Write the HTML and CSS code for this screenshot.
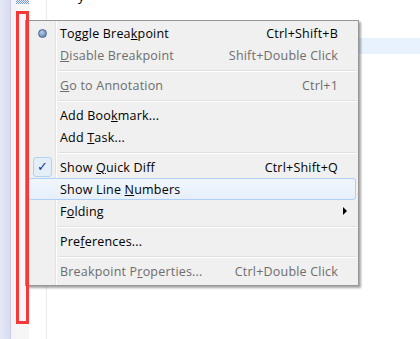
FILE: index.html
```html
<!DOCTYPE html>
<html lang="en">
<head>
    <meta charset="UTF-8">
    <title>Editor context menu</title>
    <link rel="stylesheet" href="styles.css">
</head>
<body>
    <div class="screen">
        <!-- editor backdrop -->
        <div class="side"></div>
        <div class="side-edge"></div>
        <div class="ruler"><div class="marker"></div></div>
        <div class="editor">
            <div class="code-line"><span class="glyph">y</span></div>
            <div class="current-line"></div>
        </div>

        <!-- context menu -->
        <div class="menu">
            <div class="item">
                <span class="icon"><span class="bp-dot"></span></span>
                <span class="label">Toggle Brea<u>k</u>point</span>
                <span class="key">Ctrl+Shift+B</span>
            </div>
            <div class="item disabled">
                <span class="icon"></span>
                <span class="label"><u>D</u>isable Breakpoint</span>
                <span class="key">Shift+Double Click</span>
            </div>
            <div class="sep"></div>
            <div class="item disabled">
                <span class="icon"></span>
                <span class="label"><u>G</u>o to Annotation</span>
                <span class="key">Ctrl+1</span>
            </div>
            <div class="sep"></div>
            <div class="item">
                <span class="icon"></span>
                <span class="label">Add Boo<u>k</u>mark...</span>
            </div>
            <div class="item">
                <span class="icon"></span>
                <span class="label">Add <u>T</u>ask...</span>
            </div>
            <div class="sep"></div>
            <div class="item">
                <span class="icon"><span class="check-box">&#10003;</span></span>
                <span class="label">Show <u>Q</u>uick Diff</span>
                <span class="key">Ctrl+Shift+Q</span>
            </div>
            <div class="item hover">
                <span class="icon"></span>
                <span class="label">Show Line <u>N</u>umbers</span>
            </div>
            <div class="item">
                <span class="icon"></span>
                <span class="label">F<u>o</u>lding</span>
                <span class="sub"></span>
            </div>
            <div class="sep"></div>
            <div class="item">
                <span class="icon"></span>
                <span class="label">Pre<u>f</u>erences...</span>
            </div>
            <div class="sep"></div>
            <div class="item disabled">
                <span class="icon"></span>
                <span class="label">Breakpoint P<u>r</u>operties...</span>
                <span class="key">Ctrl+Double Click</span>
            </div>
        </div>

        <!-- red callout drawn over the ruler -->
        <div class="callout"></div>
    </div>
</body>
</html>
```

FILE: styles.css
```css
body {
    margin: 0;
    background: #fff;
    font-family: "Open Sans", "Noto Sans CJK SC", sans-serif;
    font-size: 12.5px;
    letter-spacing: 0.2px;
    color: #000;
}
.screen {
    position: relative;
    width: 420px;
    height: 339px;
    overflow: hidden;
    display: flex;
}
.side {
    width: 10px;
    background: linear-gradient(to right, #e6e8f6, #d9dcf0);
}
.side-edge {
    width: 5px;
    border-left: 1px solid #c9cce2;
    background: #f3f3f8;
}
.ruler {
    width: 13px;
    background: #f6f6f6;
}
.marker {
    height: 4px;
    background: repeating-conic-gradient(#7d9be0 0 25%, #e8eefc 0 50%) 0 0 / 2px 2px;
}
.editor {
    flex: 1;
    position: relative;
    background: linear-gradient(to right, #fff 17px, #ececec 17px, #ececec 18px, #fff 18px);
}
.code-line {
    height: 4px;
    overflow: hidden;
    position: relative;
}
.glyph {
    position: absolute;
    left: 49px;
    top: -12px;
    font-size: 13px;
    line-height: 16px;
}
.current-line {
    margin-top: 34px;
    margin-left: 18px;
    height: 16px;
    background: #e8f2fe;
}

/* menu */
.menu {
    position: absolute;
    left: 25px;
    top: 20px;
    width: 334px;
    box-sizing: border-box;
    padding: 1px 2px 3px 2px;
    border: 1px solid #979797;
    background: linear-gradient(to right, transparent 29px, #e2e3e3 29px, #e2e3e3 30px, #fff 30px, #fff 31px, transparent 31px), #f0f0f0;
    box-shadow: 2px 2px 2px rgba(0, 0, 0, 0.35);
}
.item {
    height: 22px;
    display: flex;
    align-items: center;
    box-sizing: border-box;
    border: 1px solid transparent;
    border-radius: 3px;
}
.item.hover {
    border-color: #aecff7;
    background: linear-gradient(#f1f6fd, #e7effa);
}
.item.disabled {
    color: #6d6d6d;
}
.icon {
    width: 26px;
    height: 20px;
    display: flex;
    align-items: center;
    justify-content: center;
}
.label {
    flex: 1;
    padding-left: 5px;
    white-space: nowrap;
}
.key {
    padding-right: 17px;
    white-space: nowrap;
}
.sub {
    width: 0;
    height: 0;
    margin-right: 8px;
    border-top: 4px solid transparent;
    border-bottom: 4px solid transparent;
    border-left: 4px solid #000;
}
.sep {
    height: 8px;
    margin-left: 30px;
    margin-right: 0;
    background: linear-gradient(transparent 4px, #e0e0e0 4px, #e0e0e0 5px, #fff 5px, #fff 6px, transparent 6px);
}
.bp-dot {
    width: 7px;
    height: 7px;
    border-radius: 50%;
    border: 1px solid #46648f;
    background: radial-gradient(circle at 40% 35%, #b8cde6, #6f91bd 70%);
}
.check-box {
    width: 19px;
    height: 20px;
    box-sizing: border-box;
    margin-left: 1px;
    border: 1px solid #b3d2f2;
    border-radius: 3px;
    background: #e4eef9;
    color: #1a3a9e;
    font-family: "DejaVu Sans", sans-serif;
    font-size: 13px;
    line-height: 18px;
    text-align: center;
}

/* red highlight frame */
.callout {
    position: absolute;
    left: 16px;
    top: 11px;
    width: 13px;
    height: 313px;
    box-sizing: border-box;
    border: 3px solid #f73838;
}
```
